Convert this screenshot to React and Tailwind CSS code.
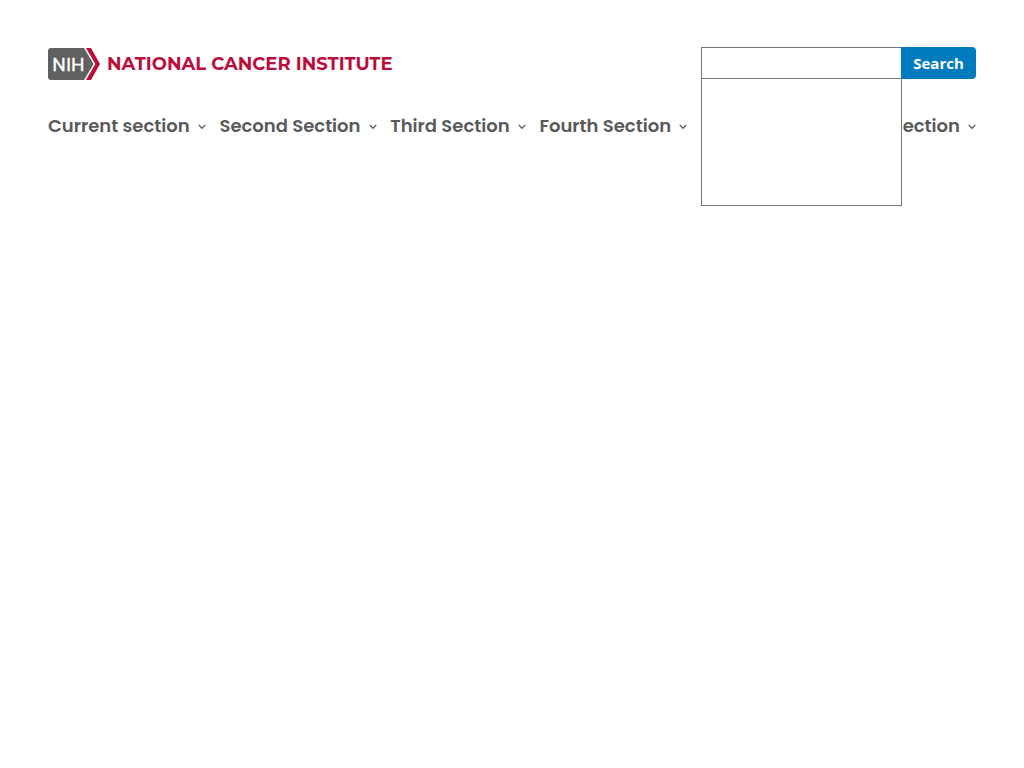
import React from "react";

const sections = [
  "Current section",
  "Second Section",
  "Third Section",
  "Fourth Section",
  "Fifth Section",
  "Sixth Section",
];

function Logo() {
  return (
    <a href="#home" aria-label="National Cancer Institute home" className="flex items-center gap-[7px]">
      <svg width="52" height="32" viewBox="0 0 52 32" aria-hidden="true">
        <path d="M3 0H36L45.500 16L36 32H3Q0 32 0 29V3Q0 0 3 0Z" fill="#606060" />
        <path d="M38 0H43L52 16L43 32H38L47.300 16Z" fill="#bb0e3d" />
        <text
          x="20.500"
          y="23"
          textAnchor="middle"
          fill="#fff"
          stroke="#fff"
          strokeWidth="0.300"
          className="font-['Roboto',sans-serif] text-[19px]"
        >
          NIH
        </text>
      </svg>
      <span className="font-['Montserrat','Inter',sans-serif] text-[18px] leading-8 font-bold whitespace-nowrap text-[#bb0e3d]">
        NATIONAL CANCER INSTITUTE
      </span>
    </a>
  );
}

function Chevron() {
  return (
    <svg width="8" height="6" viewBox="0 0 8 6" aria-hidden="true" className="mt-0.5">
      <path d="M0.700 0.900L4 4.300L7.300 0.900" fill="none" stroke="#5a5a5a" strokeWidth="1.300" />
    </svg>
  );
}

function Search() {
  return (
    <form role="search" className="flex h-8">
      <div className="relative w-[200px]">
        <input
          type="search"
          aria-label="Search"
          aria-controls="suggestions"
          className="block h-8 w-full border border-r-0 border-[#71767a] bg-white px-2 outline-none"
        />
        <div
          id="suggestions"
          role="listbox"
          aria-label="Suggestions"
          className="absolute top-full left-0 z-10 -mt-px h-32 w-[201px] border border-[#757575] bg-white"
        />
      </div>
      <button
        type="submit"
        className="h-8 w-[75px] rounded-r bg-[#007bbd] font-['Open_Sans',sans-serif] text-[15px] leading-4 font-bold text-white"
      >
        Search
      </button>
    </form>
  );
}

export default function App() {
  return (
    <div className="min-h-screen bg-white">
      <header className="px-12 pt-[47px]">
        <div className="flex items-end justify-between pb-[31px]">
          <div className="-mb-px">
            <Logo />
          </div>
          <Search />
        </div>
        <nav aria-label="Primary">
          <ul className="flex justify-between">
            {sections.map((name) => (
              <li key={name}>
                <button
                  type="button"
                  aria-expanded="false"
                  className="flex items-center gap-2 font-['Poppins','Inter',sans-serif] text-[18px] leading-8 font-semibold whitespace-nowrap text-[#5a5a5a]"
                >
                  {name}
                  <Chevron />
                </button>
              </li>
            ))}
          </ul>
        </nav>
      </header>
    </div>
  );
}
